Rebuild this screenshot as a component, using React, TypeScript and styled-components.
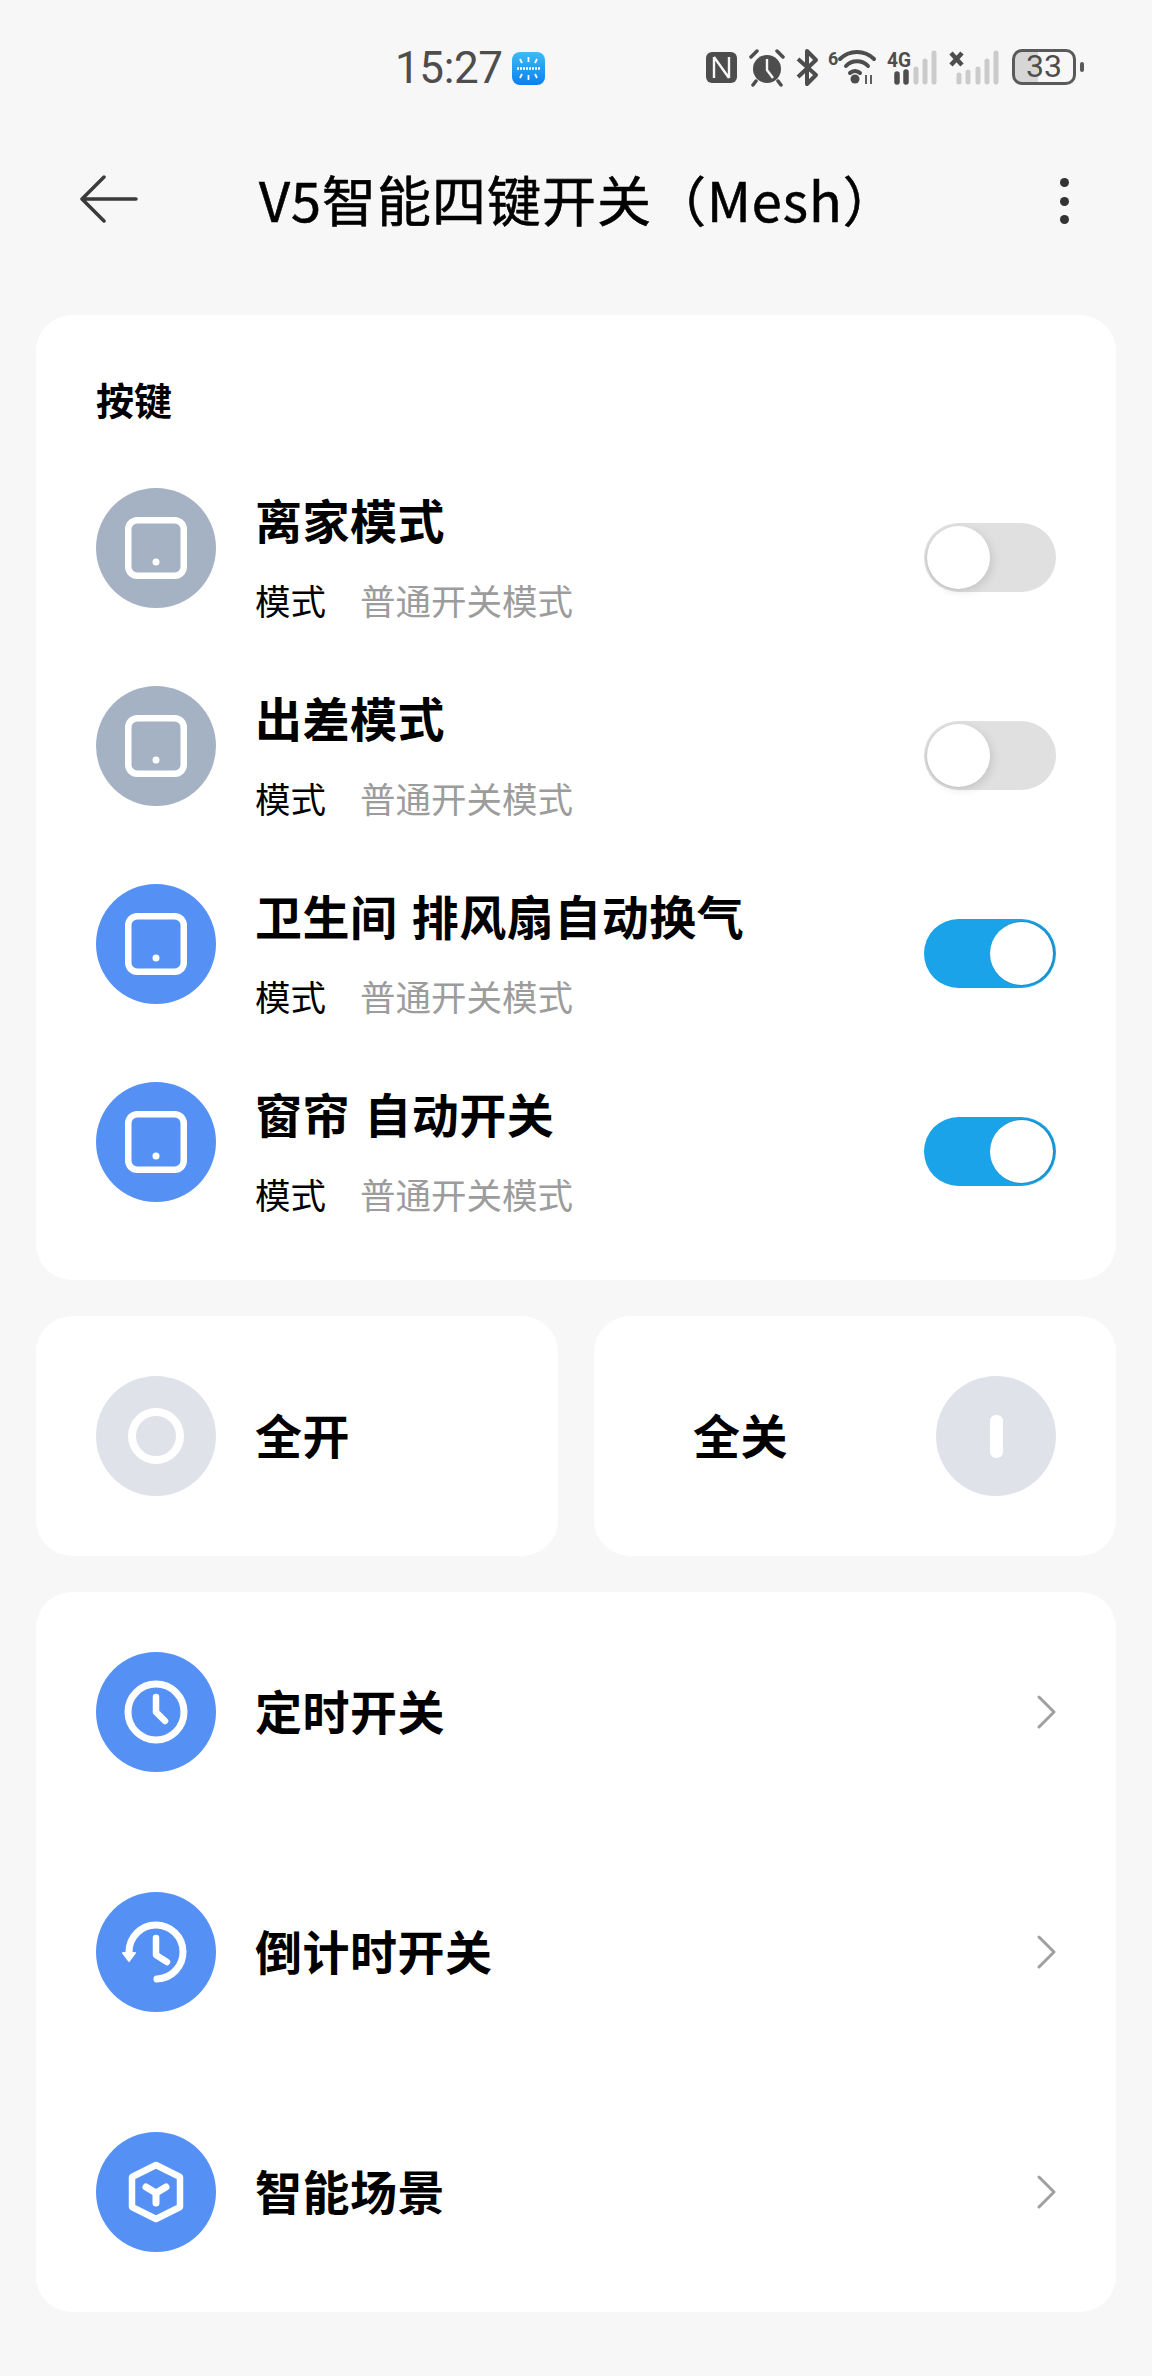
import styled, { createGlobalStyle } from "styled-components";

const GlobalStyle = createGlobalStyle`
  html, body {
    margin: 0;
    padding: 0;
    background: #f7f7f7;
  }
  body {
    font-family: "Liberation Sans", "Noto Sans CJK SC", sans-serif;
    color: #000;
  }
`;

const Page = styled.div`
  width: 1152px;
  height: 2376px;
  box-sizing: border-box;
  padding: 0 36px;
  overflow: hidden;
  background: #f7f7f7;
`;

const StatusBar = styled.div`
  height: 136px;
  box-sizing: border-box;
  padding: 46px 0 0 359px;
  display: flex;
  align-items: flex-start;
`;

const Clock = styled.span`
  font-family: "Roboto", sans-serif;
  font-size: 44px;
  line-height: 44px;
  letter-spacing: -0.4px;
  color: #4d4d4d;
  min-width: 117px;
`;

const AppBadge = styled.svg`
  width: 33px;
  height: 33px;
  flex: none;
  margin-top: 6px;
`;

const StatusIcons = styled.div`
  margin-left: 155px;
  height: 44px;
  display: flex;
  align-items: center;
`;

const Battery = styled.div`
  position: relative;
  width: 64px;
  height: 36px;
  box-sizing: border-box;
  border: 3.5px solid #5a5a5a;
  border-radius: 10px;
  margin: 0 0 2px 6px;
  font-family: "Roboto", sans-serif;
  font-size: 32px;
  line-height: 29px;
  text-align: center;
  color: #4d4d4d;
  background: linear-gradient(90deg, #d6d6d6 40%, transparent 40%);
`;

const BatteryTip = styled.span`
  position: absolute;
  right: -11px;
  top: 10px;
  width: 4px;
  height: 10px;
  border-radius: 2px;
  background: #5a5a5a;
`;

const Header = styled.div`
  height: 179px;
  display: flex;
  align-items: flex-start;
`;

const BackButton = styled.div`
  width: 60px;
  height: 48px;
  margin: 39px 0 0 44px;
`;

const Title = styled.h1`
  margin: 32px 0 0 119px;
  font-family: "Noto Sans CJK SC", sans-serif;
  font-size: 54px;
  line-height: 62px;
  font-weight: 400;
  letter-spacing: 1px;
  white-space: nowrap;
  -webkit-text-stroke: 0.6px #000;
`;

const MoreButton = styled.div`
  margin: 42px 47px 0 auto;
  width: 10px;
  height: 46px;
  display: flex;
  flex-direction: column;
  justify-content: space-between;
  align-items: center;
`;

const Dot = styled.span`
  width: 9px;
  height: 9px;
  border-radius: 50%;
  background: #333;
`;

const Card = styled.section<{ $padding: string; $margin?: string }>`
  background: #fff;
  border-radius: 36px;
  box-sizing: border-box;
  padding: ${({ $padding }) => $padding};
  margin-bottom: ${({ $margin }) => $margin || "36px"};
`;

const SectionTitle = styled.div`
  font-family: "Noto Sans CJK SC", sans-serif;
  font-weight: 700;
  font-size: 38px;
  line-height: 46px;
  padding-top: 1px;
  margin-bottom: 66px;
`;

const KeyRow = styled.div`
  height: 198px;
  display: flex;
  align-items: flex-start;
`;

const Circle = styled.div<{ $tone: string }>`
  width: 120px;
  height: 120px;
  border-radius: 50%;
  flex: none;
  display: flex;
  align-items: center;
  justify-content: center;
  background: ${({ $tone }) => $tone};
`;

const KeyText = styled.div`
  margin-left: 39px;
  flex: 1;
  font-family: "Noto Sans CJK SC", sans-serif;
`;

const KeyName = styled.div`
  font-weight: 700;
  font-size: 47px;
  line-height: 60px;
  letter-spacing: 0.5px;
  word-spacing: 3px;
  margin-top: 1px;
`;

const KeyMeta = styled.div`
  margin-top: 28px;
  font-size: 35.5px;
  line-height: 46px;
  display: flex;
  gap: 34px;
`;

const MetaValue = styled.span`
  color: #9c9c9c;
`;

const Switch = styled.div<{ $on?: boolean }>`
  position: relative;
  flex: none;
  width: 132px;
  height: 69px;
  margin-top: 35px;
  border-radius: 35px;
  background: ${({ $on }) => ($on ? "#1aa3e8" : "#e0e0e0")};
`;

const Knob = styled.span<{ $on?: boolean }>`
  position: absolute;
  top: 3px;
  left: ${({ $on }) => ($on ? "66px" : "3px")};
  width: 63px;
  height: 63px;
  border-radius: 50%;
  background: #fff;
  box-shadow: ${({ $on }) =>
    $on
      ? "1px 0 0 1px #1f8fc9"
      : "-1px 1px 2px #c4c4c4, 3px 3px 8px rgba(0,0,0,.1)"};
`;

const ActionGrid = styled.div`
  display: grid;
  grid-template-columns: 522px 522px;
  column-gap: 36px;
`;

const ActionCard = styled(Card)`
  height: 240px;
  display: flex;
  align-items: center;
`;

const ActionLabel = styled.div<{ $left: string }>`
  margin-left: ${({ $left }) => $left};
  padding-bottom: 6px;
  font-family: "Noto Sans CJK SC", sans-serif;
  font-weight: 700;
  font-size: 47px;
  letter-spacing: 0.5px;
  flex: 1;
`;

const Ring = styled.span`
  width: 56px;
  height: 56px;
  box-sizing: border-box;
  border: 8px solid #fff;
  border-radius: 50%;
`;

const Bar = styled.span`
  width: 13px;
  height: 43px;
  border-radius: 6px;
  background: #fff;
`;

const FeatureRow = styled.div<{ $last?: boolean }>`
  height: 120px;
  margin-bottom: ${({ $last }) => ($last ? "0" : "120px")};
  display: flex;
  align-items: center;
`;

const Chevron = styled.svg`
  width: 20px;
  height: 34px;
  flex: none;
`;

const keys = [
  { name: "离家模式", on: false },
  { name: "出差模式", on: false },
  { name: "卫生间 排风扇自动换气", on: true },
  { name: "窗帘 自动开关", on: true },
];

const SquareIcon = () => (
  <svg width="66" height="66" viewBox="0 0 66 66" fill="none">
    <rect x="5.25" y="5.25" width="55.5" height="55.5" rx="9" stroke="#fff" strokeWidth="6.5" />
    <circle cx="33" cy="47" r="3.5" fill="#fff" />
  </svg>
);

const ClockIcon = () => (
  <svg width="70" height="70" viewBox="0 0 70 70" fill="none" stroke="#fff" strokeWidth="7" strokeLinecap="round" strokeLinejoin="round">
    <circle cx="35" cy="35" r="28" />
    <path d="M35 20v15l9 9" strokeWidth="6.5" />
  </svg>
);

const HistoryIcon = () => (
  <svg width="70" height="70" viewBox="0 0 70 70" fill="none" stroke="#fff" strokeWidth="7" strokeLinecap="round" strokeLinejoin="round">
    <path d="M36 62A27 27 0 1 0 8 35" />
    <path d="M35 21v17l11 7" strokeWidth="6.5" />
    <path d="M2 36h12l-6 8z" fill="#fff" strokeWidth="2" />
  </svg>
);

const HexIcon = () => (
  <svg width="70" height="70" viewBox="0 0 70 70" fill="none" stroke="#fff" strokeWidth="6.5" strokeLinecap="round" strokeLinejoin="round">
    <path d="M35 8l24 12v30L35 62 11 50V20z" />
    <path d="M25 30l10 6 10-6M35 36v10" strokeWidth="7" />
  </svg>
);

// everything between the app badge and the battery, drawn in one strip
const StatusGlyphs = () => (
  <svg width="306" height="40" viewBox="0 0 306 40" fill="none">
    <rect x="6" y="4" width="31" height="31" rx="6" fill="#4d4d4d" />
    <path d="M14 9v21M29 9v21M14 9l15 21" stroke="#f7f7f7" strokeWidth="2.4" />
    <circle cx="67" cy="21" r="14" fill="#4d4d4d" />
    <path d="M67 11v11l6 8" stroke="#f7f7f7" strokeWidth="2.4" />
    <path d="M51 9l6-6M83 9l-6-6M56 33l-3 4M78 33l3 4" stroke="#4d4d4d" strokeWidth="3.5" strokeLinecap="round" />
    <path d="M98 11l18 16-9 9V3l9 9-18 17" stroke="#4d4d4d" strokeWidth="4" strokeLinejoin="round" />
    <text x="128" y="17" fontSize="18" fontFamily="Roboto" fontWeight="700" fill="#4d4d4d">6</text>
    <path d="M140 11A24 24 0 0 1 174 11M146 18A15 15 0 0 1 168 18M150 25A7 7 0 0 1 160 25" stroke="#4d4d4d" strokeWidth="4" strokeLinecap="round" />
    <circle cx="155" cy="31" r="4.5" fill="#4d4d4d" />
    <path d="M166 27v9M171 27v9" stroke="#4d4d4d" strokeWidth="1.8" />
    <text x="187" y="19" fontSize="20" fontFamily="Roboto" fontWeight="700" fill="#4d4d4d" textLength="24" lengthAdjust="spacingAndGlyphs">4G</text>
    <path d="M197 26v8M206 24v10" stroke="#4d4d4d" strokeWidth="5.5" strokeLinecap="round" />
    <path d="M216 21v13M225 13v21M234 5v29" stroke="#cbcbcb" strokeWidth="5" strokeLinecap="round" />
    <path d="M251 5l11 12M262 5l-11 12" stroke="#4d4d4d" strokeWidth="4.5" />
    <path d="M259 27v7M268 24v10M278 21v13M287 13v21M296 5v29" stroke="#cbcbcb" strokeWidth="5" strokeLinecap="round" />
  </svg>
);

const features = [
  { name: "定时开关", icon: <ClockIcon /> },
  { name: "倒计时开关", icon: <HistoryIcon /> },
  { name: "智能场景", icon: <HexIcon /> },
];

const App = () => {
  return (
    <Page>
      <GlobalStyle />
      <StatusBar>
        <Clock>15:27</Clock>
        <AppBadge viewBox="0 0 33 33">
          <defs>
            <linearGradient id="badge" x1="0" y1="0" x2="0" y2="1">
              <stop offset="0" stopColor="#3cbcf4" />
              <stop offset="1" stopColor="#0a80f0" />
            </linearGradient>
          </defs>
          <rect width="33" height="33" rx="8" fill="url(#badge)" />
          <path d="M5 16.5h23" stroke="#fff" strokeWidth="2.4" strokeDasharray="2 1" />
          <path d="M16.5 5v5M16.5 23v5M8 7l2 4M25 7l-2 4M8 26l2-4M25 26l-2-4" stroke="#fff" strokeWidth="1.8" />
        </AppBadge>
        <StatusIcons>
          <StatusGlyphs />
          <Battery>
            33
            <BatteryTip />
          </Battery>
        </StatusIcons>
      </StatusBar>

      <Header>
        <BackButton>
          <svg width="60" height="48" viewBox="0 0 60 48" fill="none" stroke="#3a3a3a" strokeWidth="3.5" strokeLinecap="round" strokeLinejoin="round">
            <path d="M2 24h54M24 2 2 24l22 22" />
          </svg>
        </BackButton>
        <Title>V5智能四键开关（Mesh）</Title>
        <MoreButton>
          <Dot />
          <Dot />
          <Dot />
        </MoreButton>
      </Header>

      <Card $padding="60px 60px 0">
        <SectionTitle>按键</SectionTitle>
        {keys.map((key) => (
          <KeyRow key={key.name}>
            <Circle $tone={key.on ? "#5591f5" : "#a5b2c3"}>
              <SquareIcon />
            </Circle>
            <KeyText>
              <KeyName>{key.name}</KeyName>
              <KeyMeta>
                <span>模式</span>
                <MetaValue>普通开关模式</MetaValue>
              </KeyMeta>
            </KeyText>
            <Switch $on={key.on}>
              <Knob $on={key.on} />
            </Switch>
          </KeyRow>
        ))}
      </Card>

      <ActionGrid>
        <ActionCard $padding="0 60px">
          <Circle $tone="#dfe2e9">
            <Ring />
          </Circle>
          <ActionLabel $left="39px">全开</ActionLabel>
        </ActionCard>
        <ActionCard $padding="0 60px 0 0">
          <ActionLabel $left="99px">全关</ActionLabel>
          <Circle $tone="#dfe2e9">
            <Bar />
          </Circle>
        </ActionCard>
      </ActionGrid>

      <Card $padding="60px" $margin="0">
        {features.map((item, i) => (
          <FeatureRow key={item.name} $last={i === features.length - 1}>
            <Circle $tone="#5591f5">{item.icon}</Circle>
            <ActionLabel $left="39px">{item.name}</ActionLabel>
            <Chevron viewBox="0 0 20 34" fill="none" stroke="#a0a0a0" strokeWidth="3" strokeLinecap="round" strokeLinejoin="round">
              <path d="M3 2l15 15L3 32" />
            </Chevron>
          </FeatureRow>
        ))}
      </Card>
    </Page>
  );
};

export default App;
